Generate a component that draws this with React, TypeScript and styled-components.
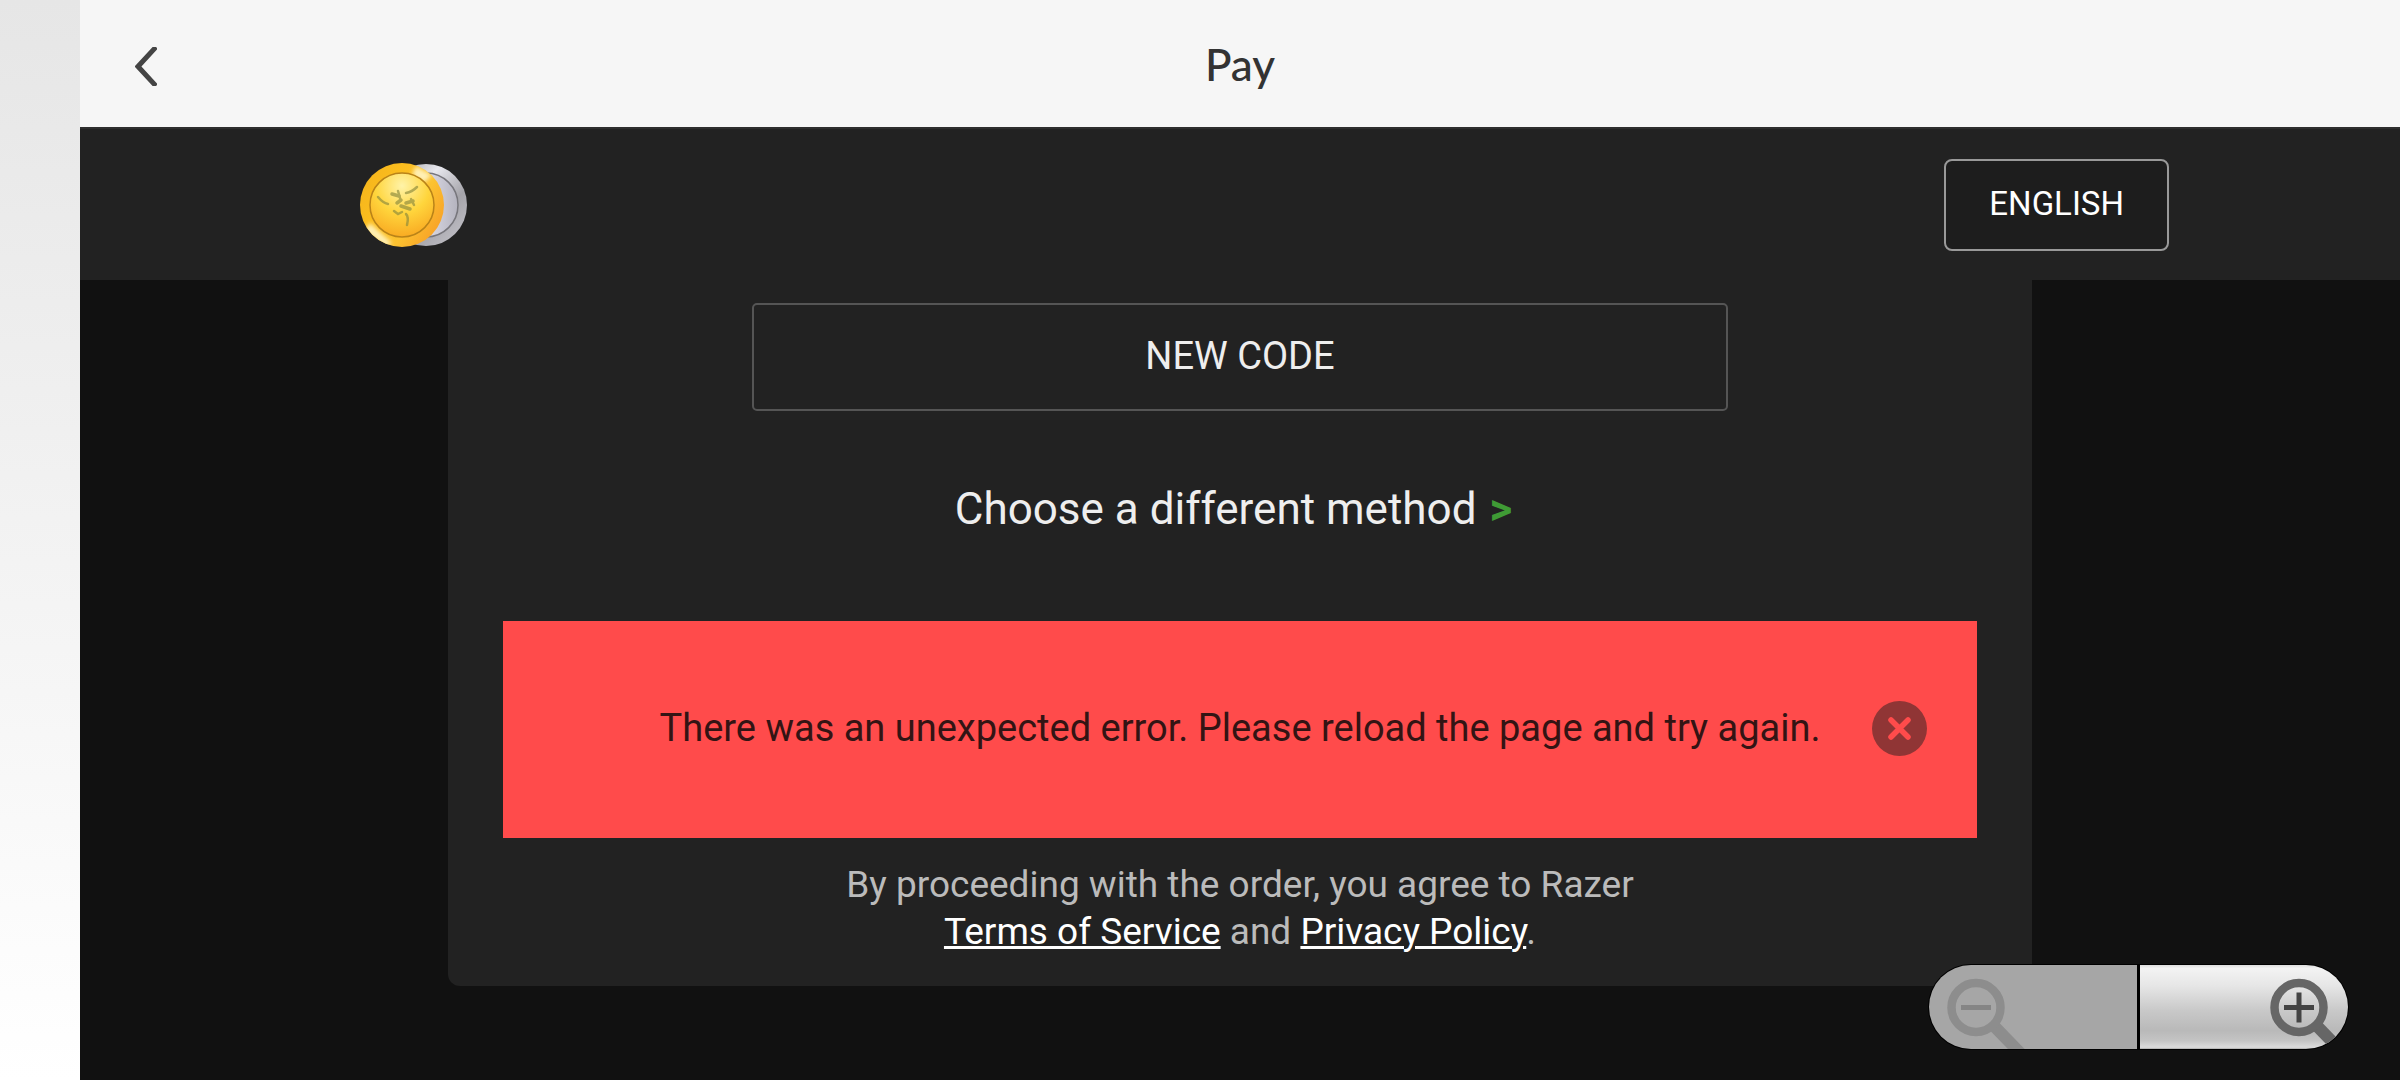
import React, { useState } from "react";
import styled, { createGlobalStyle } from "styled-components";

const GlobalStyle = createGlobalStyle`
  *, *::before, *::after { box-sizing: border-box; }
  body { margin: 0; background: #111111; font-family: Roboto, "Liberation Sans", sans-serif; }
  button { font-family: inherit; cursor: pointer; }
`;

const Shell = styled.div`
  display: flex;
  min-height: 100vh;
`;

const Rail = styled.aside`
  flex: 0 0 80px;
  background: linear-gradient(#e6e6e6, #ffffff);
`;

const Page = styled.div`
  flex: 1;
  min-width: 0;
  display: flex;
  flex-direction: column;
  background: #111111;
`;

const TitleBar = styled.header`
  display: grid;
  grid-template-columns: 1fr auto 1fr;
  align-items: center;
  height: 127px;
  padding: 0 40px;
  background: #f6f6f6;
`;

const BackButton = styled.button`
  justify-self: start;
  display: flex;
  padding: 12px 15px;
  margin-top: 6px;
  border: 0;
  background: none;
`;

const Title = styled.h1`
  margin: 0;
  color: #333333;
  font: 500 44px/56px Lato, sans-serif;
`;

const Nav = styled.nav`
  display: flex;
  justify-content: center;
  padding: 30px 32px 29px;
  border-top: 2px solid #2e2e2e;
  background: #222222;
`;

const NavInner = styled.div`
  flex: 0 1 1858px;
  display: flex;
  align-items: center;
  justify-content: space-between;
  padding-left: 49px;
`;

const LogoLink = styled.a`
  display: flex;
`;

const LanguageButton = styled.button`
  height: 92px;
  padding: 0 43px 3px;
  border: 2px solid #999999;
  border-radius: 8px;
  background: #1d1d1d;
  color: #ffffff;
  font-size: 33px;
  line-height: 40px;
`;

const Main = styled.main`
  display: flex;
  justify-content: center;
  padding: 0 32px 94px;
`;

const Card = styled.section`
  flex: 0 1 1584px;
  display: flex;
  flex-direction: column;
  align-items: center;
  padding: 23px 55px 31px;
  border-radius: 0 0 12px 12px;
  background: #222222;
`;

const NewCodeButton = styled.button`
  width: 100%;
  max-width: 976px;
  height: 108px;
  padding: 0 0 2px;
  border: 2px solid #555555;
  border-radius: 5px;
  background: transparent;
  color: #eeeeee;
  font-size: 38px;
  line-height: 48px;
`;

const MethodLink = styled.a`
  display: flex;
  gap: 13px;
  padding-right: 13px;
  margin: 70px 0 84px;
  color: #eeeeee;
  font-size: 44px;
  line-height: 56px;
  text-decoration: none;
`;

const Arrow = styled.span`
  color: #3f9b35;
  font-weight: 700;
`;

const Alert = styled.div`
  align-self: stretch;
  display: grid;
  grid-template-columns: 1fr auto 1fr;
  align-items: center;
  min-height: 217px;
  padding: 0 50px 3px;
  background: #ff4b4b;
  color: #331414;
`;

const AlertText = styled.p`
  grid-column: 2;
  margin: 0;
  font-size: 38px;
  line-height: 48px;
`;

const DismissButton = styled.button`
  justify-self: end;
  display: flex;
  padding: 0;
  border: 0;
  background: none;
`;

const Legal = styled.p`
  margin: 23px 0 0;
  color: #bbbbbb;
  font-size: 37px;
  line-height: 47px;
  text-align: center;
`;

const LegalLink = styled.a`
  color: #ffffff;
  text-decoration: underline;
  text-decoration-thickness: 3px;
`;

const Zoom = styled.div`
  position: fixed;
  right: 51px;
  bottom: 30px;
  display: flex;
  gap: 3px;
  padding: 1px;
  border-radius: 43px;
  background: #000000;
`;

const ZoomButton = styled.button<{ $side: "left" | "right" }>`
  display: flex;
  width: 208px;
  height: 84px;
  padding: 0;
  overflow: hidden;
  justify-content: ${(p) => (p.$side === "left" ? "flex-start" : "flex-end")};
  border: 0;
  border-radius: ${(p) => (p.$side === "left" ? "42px 0 0 42px" : "0 42px 42px 0")};
  color: ${(p) => (p.$side === "left" ? "#8d8d8d" : "#666666")};
  background: ${(p) =>
    p.$side === "left"
      ? "#a6a6a6"
      : "linear-gradient(#dddddd 0, #f3f3f3 4%, #e6e6e6 25%, #c8c8c8 55%, #b9b9b9 78%, #c4c4c4 90%, #dcdcdc 98%, #aaaaaa 100%)"};
`;

const Coins = () => (
  <svg width="108" height="84" viewBox="0 0 108 84" aria-hidden="true">
    <defs>
      <linearGradient id="goldRim" x1="0" y1="0.2" x2="1" y2="0.8">
        <stop offset="0" stopColor="#f5b51c" />
        <stop offset="0.3" stopColor="#fbbd1e" />
        <stop offset="0.65" stopColor="#fcc230" />
        <stop offset="1" stopColor="#f79d26" />
      </linearGradient>
      <radialGradient id="goldFace" cx="0.5" cy="0.2" r="0.85">
        <stop offset="0" stopColor="#fff3a8" />
        <stop offset="0.5" stopColor="#ffd53c" />
        <stop offset="1" stopColor="#f8a51f" />
      </radialGradient>
      <linearGradient id="silverRim" x1="0" y1="0" x2="1" y2="1">
        <stop offset="0" stopColor="#8f8f93" />
        <stop offset="0.35" stopColor="#e8e8ee" />
        <stop offset="0.65" stopColor="#a5a4aa" />
        <stop offset="1" stopColor="#c9c8cf" />
      </linearGradient>
      <linearGradient id="silverFace" x1="0" y1="0" x2="1" y2="0">
        <stop offset="0.5" stopColor="#dddce8" />
        <stop offset="1" stopColor="#b4b3be" />
      </linearGradient>
      <filter id="soften" x="-20%" y="-20%" width="140%" height="140%">
        <feGaussianBlur stdDeviation="2" />
      </filter>
      <clipPath id="goldClip">
        <circle cx="42" cy="42" r="42" />
      </clipPath>
    </defs>
    <circle cx="66" cy="42" r="41" fill="url(#silverRim)" />
    <circle cx="66" cy="42" r="32" fill="url(#silverFace)" stroke="#77767c" strokeWidth="1.5" />
    <circle cx="42" cy="42" r="42" fill="url(#goldRim)" />
    <g clipPath="url(#goldClip)">
      <g fill="#fff0b5" filter="url(#soften)">
        <path d="M56 3 L72 12 L64 20 L52 12 Z" />
        <path d="M10 60 L32 80 L26 84 L4 68 Z" />
      </g>
    </g>
    <circle cx="42" cy="42" r="32" fill="url(#goldFace)" stroke="#b98318" strokeWidth="1.5" />
    <g fill="none" stroke="#8b8a3c" strokeLinecap="round" opacity="0.65">
      <path d="M18 34 Q23 40 28 41" strokeWidth="2.5" />
      <path d="M57 24 Q52 29 46 30" strokeWidth="2.5" />
      <path d="M32 31 L39 33 M37 40 L41 37 M46 40 L53 38 M41 43 L50 46" strokeWidth="3.5" />
      <path d="M34 48 L38 51 L42 49 M51 36 L54 42 M38 28 L40 35" strokeWidth="2.5" />
      <path d="M47 62 Q49 54 46 51" strokeWidth="2.5" />
    </g>
  </svg>
);

const Magnifier = ({ plus = false }: { plus?: boolean }) => (
  <svg width="96" height="84" viewBox="0 0 96 84" aria-hidden="true">
    <g fill="none" stroke="currentColor">
      <path d="M65 61 L96 93" strokeWidth="12" />
      <circle cx="47" cy="42.5" r="24.5" strokeWidth="8.5" />
      <g stroke={plus ? "#444444" : "#858585"} strokeWidth="5">
        <path d="M32 42.5 H62" />
        {plus && <path d="M47 27.5 V57.5" />}
      </g>
    </g>
  </svg>
);

export default function App() {
  const [error, setError] = useState(true);
  return (
    <>
      <GlobalStyle />
      <Shell>
        <Rail />
        <Page>
          <TitleBar>
            <BackButton aria-label="Back">
              <svg width="22" height="39" viewBox="0 0 22 39" aria-hidden="true">
                <path d="M21 0 L3 19.5 L21 39" fill="none" stroke="#444444" strokeWidth="5" />
              </svg>
            </BackButton>
            <Title>Pay</Title>
          </TitleBar>
          <Nav>
            <NavInner>
              <LogoLink href="#" aria-label="Home">
                <Coins />
              </LogoLink>
              <LanguageButton>ENGLISH</LanguageButton>
            </NavInner>
          </Nav>
          <Main>
            <Card>
              <NewCodeButton>NEW CODE</NewCodeButton>
              <MethodLink href="#">
                Choose a different method <Arrow>&gt;</Arrow>
              </MethodLink>
              {error && (
                <Alert role="alert">
                  <AlertText>There was an unexpected error. Please reload the page and try again.</AlertText>
                  <DismissButton aria-label="Dismiss" onClick={() => setError(false)}>
                    <svg width="55" height="55" viewBox="0 0 55 55" aria-hidden="true">
                      <circle cx="27.5" cy="27.5" r="27.5" fill="#903535" />
                      <path d="M19 19 L36 36 M36 19 L19 36" stroke="#ff4b4b" strokeWidth="5.5" strokeLinecap="round" />
                    </svg>
                  </DismissButton>
                </Alert>
              )}
              <Legal>
                By proceeding with the order, you agree to Razer
                <br />
                <LegalLink href="#">Terms of Service</LegalLink> and <LegalLink href="#">Privacy Policy</LegalLink>.
              </Legal>
            </Card>
          </Main>
        </Page>
      </Shell>
      <Zoom role="group" aria-label="Zoom">
        <ZoomButton $side="left" aria-label="Zoom out" disabled>
          <Magnifier />
        </ZoomButton>
        <ZoomButton $side="right" aria-label="Zoom in">
          <Magnifier plus />
        </ZoomButton>
      </Zoom>
    </>
  );
}
